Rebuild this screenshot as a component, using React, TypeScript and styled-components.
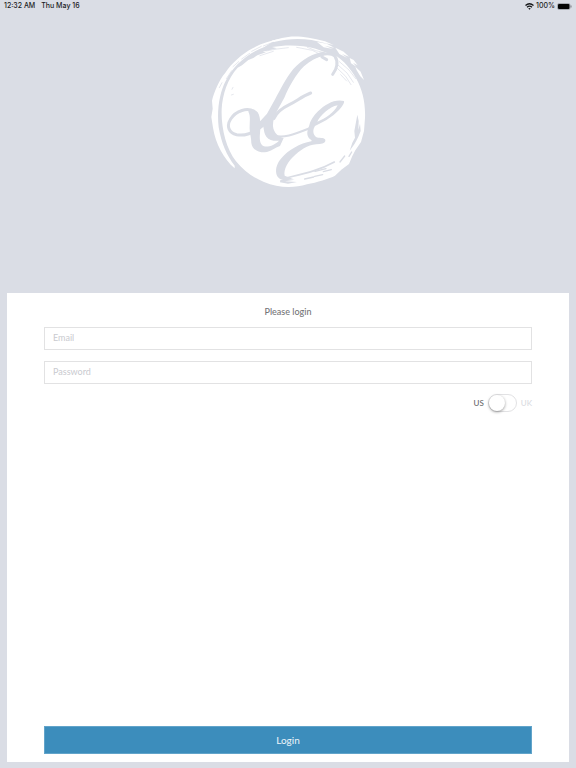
import React, { useState } from "react";
import styled, { createGlobalStyle } from "styled-components";

const mist = "#dadde5";

const GlobalStyle = createGlobalStyle`
  *, *::before, *::after { box-sizing: border-box; }
  body { margin: 0; background: ${mist}; }
  button, input { font: inherit; }
`;

const Page = styled.div`
  min-height: 100vh;
  display: flex;
  flex-direction: column;
  padding: 0 7px 6px;
  background: ${mist};
  font-family: Lato, sans-serif;
`;

const StatusBar = styled.header`
  display: flex;
  justify-content: space-between;
  height: 12px;
  margin: 0 -3px;
  font: 500 7px/12px Inter, sans-serif;
  color: #1b1c1e;
`;

const StatusGroup = styled.div<{ $gap: number }>`
  display: flex;
  align-items: center;
  gap: ${(p) => p.$gap}px;
`;

const Brand = styled.div`
  display: flex;
  justify-content: center;
  height: 281px;
  padding-top: 14px;
`;

const Panel = styled.form`
  flex: 1;
  display: flex;
  flex-direction: column;
  padding: 11px 37px 8px;
  background: #fff;
`;

const Heading = styled.h1`
  margin: 0 0 8px;
  font-size: 9px;
  font-weight: 500;
  line-height: 15px;
  text-align: center;
  color: #747577;
`;

const Field = styled.input`
  width: 100%;
  height: 23px;
  margin-bottom: 11px;
  padding: 0 8px 2px;
  border: 1px solid #e2e2e3;
  border-radius: 0;
  outline: none;
  background: #fff;
  font-size: 9px;
  color: #55575a;

  &::placeholder { color: #c9cacf; opacity: 1; }
  &:focus { border-color: #3c8dbc; }
`;

const RegionSwitch = styled.label`
  display: flex;
  align-items: center;
  align-self: flex-end;
  gap: 4px;
  height: 18px;
  margin-top: -1px;
  cursor: pointer;
`;

const RegionName = styled.span<{ $active: boolean }>`
  font-size: 8px;
  line-height: 12px;
  font-weight: 500;
  color: ${(p) => (p.$active ? "#66676a" : "#d9dbe1")};
`;

const Toggle = styled.input`
  appearance: none;
  display: flex;
  align-items: center;
  width: 29px;
  height: 18px;
  margin: 0;
  border: 1px solid #e2e2e4;
  border-radius: 9px;
  background: #fff;
  cursor: pointer;

  &::before {
    content: "";
    width: 16px;
    height: 16px;
    border-radius: 50%;
    background: #fff;
    box-shadow: 0 1px 3px rgba(0, 0, 0, 0.4);
  }
  &:checked { justify-content: flex-end; }
`;

const LoginButton = styled.button`
  height: 28px;
  margin-top: auto;
  padding: 0;
  border: 1px solid #62a4ca;
  background: #3c8dbc;
  font-size: 10px;
  color: #edf5fa;
  cursor: pointer;
`;

function Wifi() {
  return (
    <svg width="9" height="7" viewBox="0 0 18 14" fill="none" stroke="#151618" strokeWidth="2.5" aria-hidden="true">
      <path d="M1 5Q9-2 17 5M4 8.5Q9 4 14 8.5" />
      <path d="M6.5 11Q9 8.5 11.5 11L9 13.5Z" fill="#151618" stroke="none" />
    </svg>
  );
}

function Battery() {
  return (
    <svg width="15" height="7" viewBox="0 0 30 14" aria-hidden="true">
      <rect x="1" y="1" width="25" height="12" rx="3" fill="none" stroke="#777a80" />
      <rect x="2" y="2" width="23" height="10" rx="2" fill="#050505" />
      <path d="M28 5v4" stroke="#777a80" strokeWidth="2" />
    </svg>
  );
}

function Logo() {
  return (
    <svg width="176" height="172" viewBox="0 0 528 516" role="img" aria-label="LCE">
      <g fill="#fff">
        <path d="M65 250C67 205 83 158 113 125L126 118L145 102L160 96L172 88L198 79L188 77L231 67L216 63C260 55 307 57 347 68L376 79L409 90C432 105 450 126 469 158C487 190 497 230 495 276L492 315L483 348L466 373L457 390L447 414L424 431L405 449C388 458 350 469 321 475C278 488 233 485 192 468C157 454 131 434 108 406C78 368 63 305 65 250Z" />
        <path d="M104 427C70 397 47 353 39 305L34 273L38 248L36 224C42 200 58 160 75 142C95 111 125 85 158 67C183 52 211 44 242 38L211 52L193 63C140 83 99 120 77 165C59 200 50 250 56 304C64 351 80 389 104 419Z" />
        <path d="M215 44L246 36C280 27 320 31 375 46L401 57L374 51C330 38 280 33 221 48ZM351 48L380 53L403 65L374 59L399 69L371 64ZM406 65L431 77L447 92L426 84L442 96L418 84ZM449 96L461 102L473 118L459 110L469 122L453 112ZM466 122L482 137L492 162L481 151L470 133Z" />
      </g>
      <g fill="none" stroke={mist} strokeLinecap="round">
        <path d="M186 300C160 322 131 330 110 326C87 321 78 300 92 279C108 254 143 243 162 257" strokeWidth="9" />
        <path d="M332 201C306 211 292 224 268 236C247 246 231 257 222 277" strokeWidth="9" />
        <path d="M222 327C245 340 285 324 328 307" strokeWidth="6" />
        <path d="M398 145C412 128 415 106 405 91C396 81 372 81 350 90" strokeWidth="9" />
        <path d="M366 93L380 101" strokeWidth="9" />
        <path d="M250 458C306 444 352 436 403 408" strokeWidth="5" />
      </g>
      <g fill={mist}>
        <path d="M375 77C340 80 308 99 280 129C256 158 242 190 226 218L201 263L179 287L180 303L190 302C192 314 193 323 199 332C207 343 221 345 237 344C226 356 206 364 192 361C180 356 178 342 180 322C182 298 182 272 173 259C164 248 150 247 145 257C153 272 148 289 149 310C150 326 154 336 154 351C156 370 173 379 194 379C213 377 225 365 240 360L251 336C236 334 221 321 219 301C217 273 240 240 253 215C268 181 286 147 312 121C331 104 350 93 371 89Z" />
        <path fillRule="evenodd" d="M432 225C405 218 376 234 354 256C340 270 330 285 327 301C322 313 319 325 326 335C331 341 338 343 334 346C300 352 265 372 244 397C232 411 226 427 229 443C232 455 241 462 258 463L281 460L254 449C250 430 264 405 286 386C309 366 331 354 359 354C372 354 379 347 375 340C371 334 357 337 348 333C338 324 338 311 345 300C377 286 407 266 424 244C429 236 434 229 432 225ZM413 238C402 260 377 278 352 287C360 269 388 242 413 238Z" />
        <path d="M241 462L285 461L255 466L291 468L264 473L240 469Z" />
        <path d="M472 266L476 285L475 312L480 293L482 315L475 332L469 344L463 355L449 374L457 350L465 335L463 315Z" />
      </g>
      <g fill="none" stroke={mist} strokeLinecap="round">
        <path d="M455 378L447 391M434 390L420 408M378 428L345 436M344 451L368 446M314 459L341 453M370 437L394 431" strokeWidth="4" />
        <path d="M410 125L437 151L453 176M414 117L441 141L460 169M417 106L447 132L467 158M422 146L440 165" strokeWidth="2" />
        <path d="M198 75L231 69L265 65M180 89L220 76M96 190L99 184M94 207L100 205" strokeWidth="2" />
        <path d="M322 64L347 74L370 79M290 64L337 73L357 83" strokeWidth="2" />
        <path d="M58 185L66 170M79 158L95 134M99 122L116 107M125 99L149 82M155 76L184 61M190 60L219 49" strokeWidth="2" />
      </g>
    </svg>
  );
}

export default function App() {
  const [uk, setUk] = useState(false);

  return (
    <>
      <GlobalStyle />
      <Page>
        <StatusBar>
          <StatusGroup $gap={6}>
            <span>12:32 AM</span>
            <span>Thu May 16</span>
          </StatusGroup>
          <StatusGroup $gap={2}>
            <Wifi />
            <span>100%</span>
            <Battery />
          </StatusGroup>
        </StatusBar>
        <Brand>
          <Logo />
        </Brand>
        <Panel onSubmit={(e) => e.preventDefault()}>
          <Heading>Please login</Heading>
          <Field type="email" placeholder="Email" aria-label="Email" />
          <Field type="password" placeholder="Password" aria-label="Password" />
          <RegionSwitch>
            <RegionName $active={!uk}>US</RegionName>
            <Toggle type="checkbox" role="switch" checked={uk} onChange={(e) => setUk(e.target.checked)} />
            <RegionName $active={uk}>UK</RegionName>
          </RegionSwitch>
          <LoginButton type="submit">Login</LoginButton>
        </Panel>
      </Page>
    </>
  );
}
